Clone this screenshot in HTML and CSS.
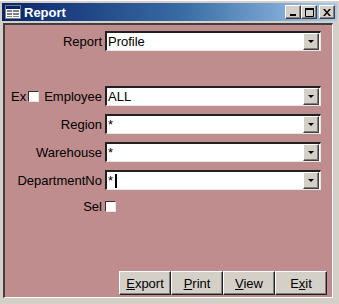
FILE: index.html
```html
<!DOCTYPE html>
<html lang="en">

<head>
    <meta charset="UTF-8">
    <title>Report</title>
    <link rel="stylesheet" href="styles.css">
</head>

<body>
    <div class="window">
        <div class="titlebar">
            <svg class="app-icon" width="16" height="14" viewBox="0 0 16 14">
                <rect x="0.5" y="0.5" width="15" height="13" fill="#fff" stroke="#808080" />
                <rect x="1" y="1" width="14" height="3" fill="#0a246a" />
                <rect x="2" y="5" width="5" height="2" fill="#808080" />
                <rect x="8" y="5" width="6" height="2" fill="#808080" />
                <rect x="2" y="8" width="5" height="2" fill="#808080" />
                <rect x="8" y="8" width="6" height="2" fill="#808080" />
                <rect x="2" y="11" width="5" height="1" fill="#808080" />
                <rect x="8" y="11" width="6" height="1" fill="#808080" />
            </svg>
            <span class="title">Report</span>
            <div class="caption-btns">
                <button class="cap-btn">
                    <svg width="8" height="7" viewBox="0 0 8 7"><rect x="1" y="5" width="6" height="2" fill="#000" /></svg>
                </button>
                <button class="cap-btn">
                    <svg width="9" height="9" viewBox="0 0 9 9"><path d="M0.5 1.5h8v7h-8z" fill="none" stroke="#000" /><rect x="0" y="0" width="9" height="2" fill="#000" /></svg>
                </button>
                <button class="cap-btn close">
                    <svg width="8" height="7" viewBox="0 0 8 7"><path d="M0 0h2l2 2.5 2-2.5h2l-3 3.5 3 3.5h-2l-2-2.5-2 2.5h-2l3-3.5z" fill="#000" /></svg>
                </button>
            </div>
        </div>

        <div class="form">
            <div class="row first">
                <div class="label">Report</div>
                <div class="combo"><span class="value">Profile</span><span class="drop"></span></div>
            </div>
            <div class="row">
                <div class="label">Ex<span class="check"></span>Employee</div>
                <div class="combo"><span class="value">ALL</span><span class="drop"></span></div>
            </div>
            <div class="row">
                <div class="label">Region</div>
                <div class="combo"><span class="value">*</span><span class="drop"></span></div>
            </div>
            <div class="row">
                <div class="label">Warehouse</div>
                <div class="combo"><span class="value">*</span><span class="drop"></span></div>
            </div>
            <div class="row">
                <div class="label">DepartmentNo</div>
                <div class="combo"><span class="value">*<span class="caret"></span></span><span class="drop"></span></div>
            </div>
            <div class="row sel">
                <div class="label">Sel</div>
                <div><span class="check"></span></div>
            </div>

            <div class="actions">
                <button class="btn"><u>E</u>xport</button>
                <button class="btn"><u>P</u>rint</button>
                <button class="btn"><u>V</u>iew</button>
                <button class="btn">E<u>x</u>it</button>
            </div>
        </div>
    </div>
</body>

</html>
```

FILE: styles.css
```css
* {
    box-sizing: border-box;
    margin: 0;
}

body {
    font-family: 'Liberation Sans', Arial, sans-serif;
    font-size: 13px;
    background-color: #d4d0c8;
}

.window {
    width: 339px;
    height: 304px;
    padding: 2px;
    display: flex;
    flex-direction: column;
    background-color: #d4d0c8;
    border-top: 1px solid #ffffff;
}

.titlebar {
    height: 18px;
    display: flex;
    align-items: center;
    padding: 0 2px 0 3px;
    background: linear-gradient(to right, #0a246a, #3a6ea5 55%, #a6caf0);
}

.app-icon {
    margin-right: 3px;
}

.title {
    color: #ffffff;
    font-weight: bold;
    font-size: 13px;
}

.caption-btns {
    margin-left: auto;
    display: flex;
}

.cap-btn {
    width: 16px;
    height: 14px;
    padding: 0;
    display: flex;
    align-items: center;
    justify-content: center;
    background-color: #d4d0c8;
    border: 1px solid;
    border-color: #ffffff #404040 #404040 #ffffff;
    box-shadow: inset -1px -1px 0 #808080;
}

.cap-btn.close {
    margin-left: 2px;
}

.form {
    flex: 1;
    margin: 2px 4px 4px 1px;
    padding: 6px 5px 2px 0;
    display: flex;
    flex-direction: column;
    background-color: #bf8d8d;
    border-style: solid;
    border-width: 2px 1px 1px 2px;
    border-color: #404040 #ffffff #ffffff #404040;
}

.row {
    display: grid;
    grid-template-columns: 97px 216px;
    column-gap: 3px;
    align-items: center;
    height: 20px;
    margin-top: 8px;
}

.row.first {
    margin-top: 0;
    margin-bottom: 27px;
}

.row.sel {
    height: 16px;
}

.label {
    display: flex;
    align-items: center;
    justify-content: flex-end;
    color: #000000;
    white-space: nowrap;
}

.label .check {
    margin: 0 5px 0 2px;
}

.check {
    display: block;
    width: 11px;
    height: 11px;
    background-color: #ffffff;
    border-style: solid;
    border-width: 1px;
    border-color: #303030 #e8e8e8 #e8e8e8 #303030;
}

.combo {
    height: 20px;
    display: flex;
    align-items: center;
    background-color: #ffffff;
    border-style: solid;
    border-width: 2px 1px 1px 2px;
    border-color: #202020 #e8e8e8 #e8e8e8 #202020;
    padding-left: 1px;
}

.value {
    flex: 1;
    display: flex;
    align-items: center;
    color: #000000;
}

.caret {
    display: inline-block;
    width: 2px;
    height: 14px;
    margin-left: 2px;
    background-color: #000000;
}

.drop {
    width: 16px;
    height: 17px;
    margin-right: 1px;
    position: relative;
    background-color: #d4d0c8;
    border: 1px solid;
    border-color: #ffffff #404040 #404040 #ffffff;
    box-shadow: inset -1px -1px 0 #808080;
}

.drop::after {
    content: '';
    position: absolute;
    left: 4px;
    top: 6px;
    border-left: 3px solid transparent;
    border-right: 3px solid transparent;
    border-top: 3px solid #000000;
}

.actions {
    margin-top: auto;
    display: flex;
    justify-content: flex-end;
}

.btn {
    width: 52px;
    height: 24px;
    padding: 0;
    font-family: 'Liberation Sans', Arial, sans-serif;
    font-size: 13px;
    color: #000000;
    background-color: #d4d0c8;
    border: 1px solid;
    border-color: #ffffff #202020 #202020 #ffffff;
    box-shadow: inset -1px -1px 0 #808080;
}
```
